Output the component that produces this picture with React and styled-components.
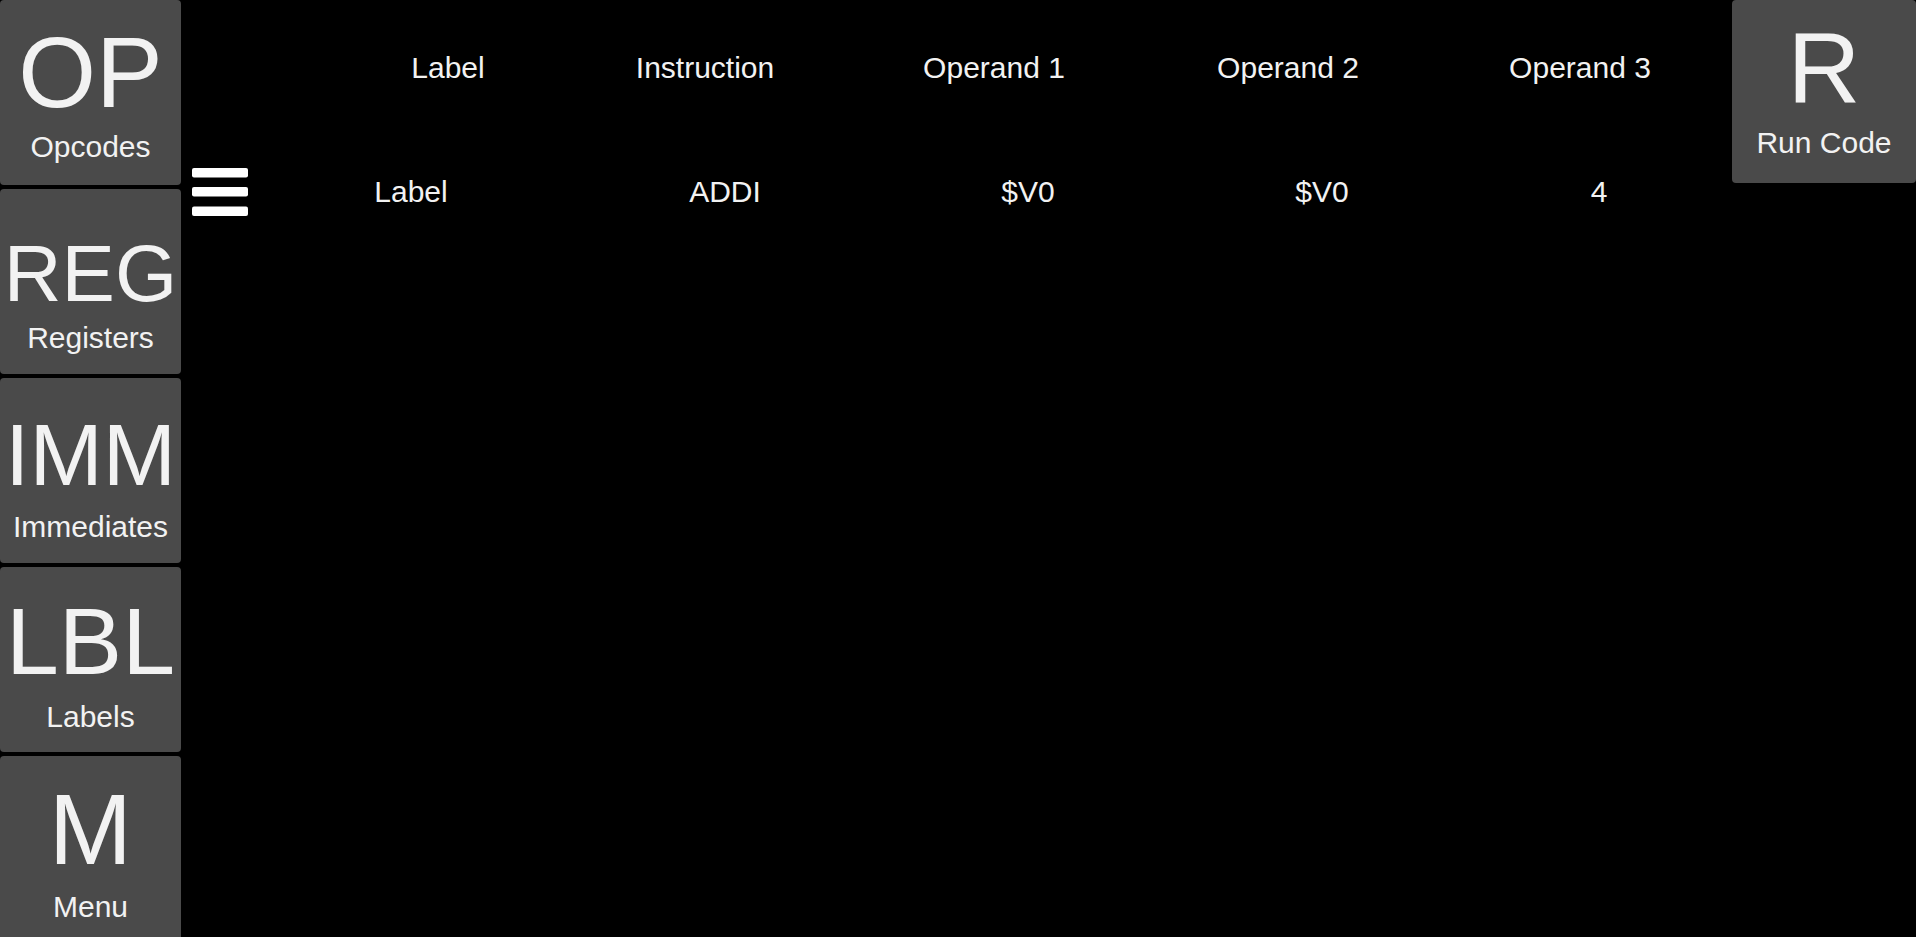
import React from 'react';
import styled, { createGlobalStyle } from 'styled-components';

const GlobalStyle = createGlobalStyle`
  html, body {
    margin: 0;
    padding: 0;
    background: #000;
  }
  body {
    font-family: "Liberation Sans", Arial, sans-serif;
    color: #f2f2f2;
  }
`;

const Screen = styled.div`
  display: flex;
  height: 100vh;
  overflow: hidden;
  background: #000;
`;

const Sidebar = styled.div`
  display: grid;
  grid-template-rows: repeat(5, 185px);
  row-gap: 4px;
  width: 181px;
  flex-shrink: 0;
`;

const Tile = styled.div`
  display: flex;
  flex-direction: column;
  align-items: center;
  background: #4a4a4a;
  border-radius: 4px;
  width: ${props => props.$width || 181}px;
  height: ${props => props.$height || 185}px;
  cursor: pointer;
  overflow: hidden;
`;

// big glyph box, baseline placed at $base px from the tile top
const Glyph = styled.div`
  box-sizing: border-box;
  height: ${props => props.$box}px;
  padding-top: ${props => props.$base - 0.8465 * props.$size}px;
  font-size: ${props => props.$size}px;
  line-height: 1;
  white-space: nowrap;
`;

const Caption = styled.div`
  font-size: 30px;
  line-height: 1;
  white-space: nowrap;
`;

const Main = styled.div`
  flex: 1;
  display: flex;
  flex-direction: column;
`;

const HeaderRow = styled.div`
  display: flex;
  padding: 53px 0 0 149px;
`;

const Cell = styled.div`
  width: ${props => props.$w}px;
  text-align: center;
  font-size: 30px;
  line-height: 1;
  white-space: nowrap;
`;

const CodeRow = styled.div`
  display: flex;
  align-items: center;
  height: 48px;
  margin-top: 85px;
  padding-left: 11px;
`;

const MenuIcon = styled.svg`
  width: 56px;
  height: 48px;
  margin-right: 42px;
  flex-shrink: 0;
`;

const RunArea = styled.div`
  flex-shrink: 0;
`;

const tools = [
  { key: 'OP', name: 'Opcodes', size: 100, base: 107, box: 132 },
  { key: 'REG', name: 'Registers', size: 80, base: 113, box: 134 },
  { key: 'IMM', name: 'Immediates', size: 88, base: 107, box: 134 },
  { key: 'LBL', name: 'Labels', size: 95, base: 107, box: 135 },
  { key: 'M', name: 'Menu', size: 100, base: 108, box: 136 },
];

const headers = [
  ['Label', 236],
  ['Instruction', 278],
  ['Operand 1', 300],
  ['Operand 2', 288],
  ['Operand 3', 296],
];

const cells = [
  ['Label', 242],
  ['ADDI', 386],
  ['$V0', 220],
  ['$V0', 368],
  ['4', 186],
];

export default function App() {
  return (
    <>
      <GlobalStyle />
      <Screen>
        <Sidebar>
          {tools.map(t => (
            <Tile key={t.key}>
              <Glyph $size={t.size} $base={t.base} $box={t.box}>{t.key}</Glyph>
              <Caption>{t.name}</Caption>
            </Tile>
          ))}
        </Sidebar>

        <Main>
          <HeaderRow>
            {headers.map(([text, w]) => (
              <Cell key={text} $w={w}>{text}</Cell>
            ))}
          </HeaderRow>
          <CodeRow>
            <MenuIcon viewBox="0 0 56 48">
              <rect x="0" y="0" width="56" height="9.5" rx="2" fill="#fff" />
              <rect x="0" y="19" width="56" height="9.5" rx="2" fill="#fff" />
              <rect x="0" y="38.5" width="56" height="9.5" rx="2" fill="#fff" />
            </MenuIcon>
            {cells.map(([text, w], i) => (
              <Cell key={i} $w={w}>{text}</Cell>
            ))}
          </CodeRow>
        </Main>

        <RunArea>
          <Tile $width={184} $height={183}>
            <Glyph $size={101} $base={103} $box={128}>R</Glyph>
            <Caption>Run Code</Caption>
          </Tile>
        </RunArea>
      </Screen>
    </>
  );
}
